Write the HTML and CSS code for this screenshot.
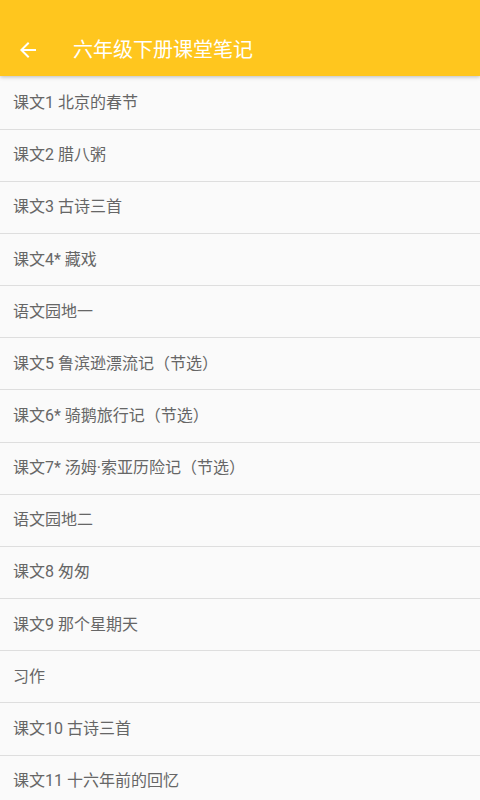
FILE: index.html
```html
<!DOCTYPE html>
<html lang="zh">
<head>
<meta charset="utf-8">
<title>六年级下册课堂笔记</title>
<link rel="stylesheet" href="styles.css">
</head>
<body>
<header class="appbar">
  <div class="toolbar">
    <span class="back">
      <svg viewBox="0 0 24 24" width="24" height="24"><path d="M20 11H7.83l5.59-5.59L12 4l-8 8 8 8 1.41-1.41L7.83 13H20v-2z" fill="#fff"/></svg>
    </span>
    <h1 class="title">六年级下册课堂笔记</h1>
  </div>
</header>
<ul class="list">
  <li class="item">课文1 北京的春节</li>
  <li class="item">课文2 腊八粥</li>
  <li class="item">课文3 古诗三首</li>
  <li class="item">课文4* 藏戏</li>
  <li class="item">语文园地一</li>
  <li class="item">课文5 鲁滨逊漂流记（节选）</li>
  <li class="item">课文6* 骑鹅旅行记（节选）</li>
  <li class="item">课文7* 汤姆·索亚历险记（节选）</li>
  <li class="item">语文园地二</li>
  <li class="item">课文8 匆匆</li>
  <li class="item">课文9 那个星期天</li>
  <li class="item">习作</li>
  <li class="item">课文10 古诗三首</li>
  <li class="item">课文11 十六年前的回忆</li>
</ul>
</body>
</html>
```
FILE: styles.css
```css
html, body {
  margin: 0;
  padding: 0;
  height: 100%;
  overflow: hidden;
}
body {
  background: #fafafa;
  font-family: "Roboto", "Noto Sans CJK SC", sans-serif;
}
.appbar {
  position: relative;
  z-index: 2;
  height: 76px;
  background: #ffc61e;
  box-shadow: 0 1px 4px rgba(0,0,0,0.25);
  padding-top: 24px;
  box-sizing: border-box;
}
.toolbar {
  height: 52px;
  display: flex;
  align-items: center;
}
.back {
  width: 24px;
  height: 24px;
  margin-left: 16px;
  display: flex;
}
.title {
  margin: 0 0 0 33px;
  font-size: 20px;
  font-weight: normal;
  color: #fff;
  line-height: 1;
}
.list {
  list-style: none;
  margin: 1.5px 0 0;
  padding: 0;
}
.item {
  height: 52.17px;
  box-sizing: border-box;
  border-bottom: 1px solid #dedede;
  display: flex;
  align-items: center;
  padding: 0 0 4px 13px;
  font-size: 16px;
  color: #666;
}
```
